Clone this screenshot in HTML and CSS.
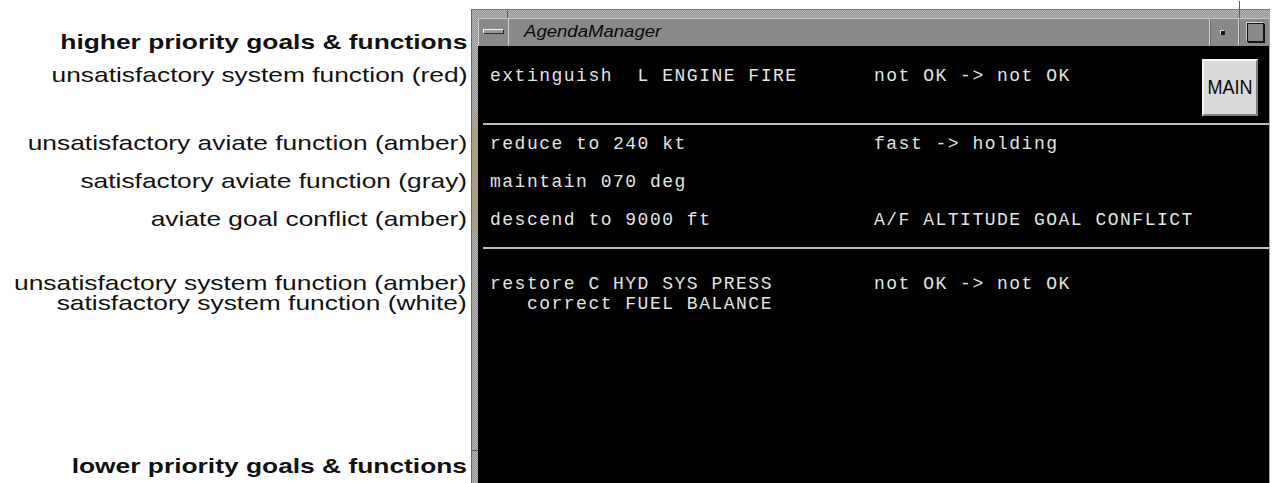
FILE: index.html
```html
<!DOCTYPE html>
<html lang="en">
<head>
<meta charset="utf-8">
<title>AgendaManager</title>
<link rel="stylesheet" href="styles.css">
</head>
<body>
<div class="page">
  <div class="legend">
    <div class="lg head">higher priority goals &amp; functions</div>
    <div class="lg r38 lg-top">unsatisfactory system function (red)</div>
    <div class="lg r38 lg-aviate">unsatisfactory aviate function (amber)</div>
    <div class="lg r38">satisfactory aviate function (gray)</div>
    <div class="lg r38">aviate goal conflict (amber)</div>
    <div class="lg r20 lg-sys">unsatisfactory system function (amber)</div>
    <div class="lg r20">satisfactory system function (white)</div>
    <div class="lg head foot">lower priority goals &amp; functions</div>
  </div>

  <div class="window">
    <span class="tick tick-top-l"></span>
    <span class="tick tick-top-r"></span>
    <span class="tick tick-left"></span>
    <div class="titlebar">
      <div class="tb-btn tb-menu"><span class="menu-bar"></span></div>
      <div class="tb-title"><span class="tb-name">AgendaManager</span></div>
      <div class="tb-btn tb-min"><span class="dot"></span></div>
      <div class="tb-btn tb-max"><span class="sq"></span></div>
    </div>
    <div class="agenda">
      <section class="band band-top">
        <div class="rows">
          <div class="row r38"><span class="goal">extinguish  L ENGINE FIRE</span><span class="state">not OK -&gt; not OK</span></div>
        </div>
        <button class="main-btn" type="button"><span class="main-label">MAIN</span></button>
      </section>
      <div class="rule"></div>
      <section class="band band-aviate">
        <div class="rows">
          <div class="row r38"><span class="goal">reduce to 240 kt</span><span class="state">fast -&gt; holding</span></div>
          <div class="row r38"><span class="goal">maintain 070 deg</span><span class="state"></span></div>
          <div class="row r38"><span class="goal">descend to 9000 ft</span><span class="state">A/F ALTITUDE GOAL CONFLICT</span></div>
        </div>
      </section>
      <div class="rule"></div>
      <section class="band band-sys">
        <div class="rows">
          <div class="row r20"><span class="goal">restore C HYD SYS PRESS</span><span class="state">not OK -&gt; not OK</span></div>
          <div class="row r20"><span class="goal">   correct FUEL BALANCE</span><span class="state"></span></div>
        </div>
      </section>
    </div>
  </div>
</div>
</body>
</html>
```

FILE: styles.css
```css
html, body {
  margin: 0;
  padding: 0;
  background: #ffffff;
}

body {
  overflow: hidden;
}

.page {
  display: flex;
  height: 483px;
  overflow: hidden;
}

/* ---------- legend column ---------- */
.legend {
  width: 471px;
  flex: none;
  box-sizing: border-box;
  padding: 30px 4px 5px 0;
  display: flex;
  flex-direction: column;
  align-items: flex-end;
  font-family: "Liberation Sans", Arial, sans-serif;
  font-size: 21px;
  color: #111;
  white-space: nowrap;
}

/* the legend face is set wide */
.lg {
  transform: scaleX(1.255);
  transform-origin: right center;
}

.lg.head {
  font-weight: bold;
  height: 24px;
  line-height: 24px;
}

.lg.r38 {
  height: 38px;
  line-height: 38px;
}

.lg.r20 {
  height: 20px;
  line-height: 20px;
}

.lg-top { margin-top: 2px; }
.lg-aviate { margin-top: 30px; }
.lg-sys { margin-top: 35px; }
.lg.foot { margin-top: auto; }

/* ---------- window ---------- */
.window {
  position: relative;
  margin-top: 9px;
  width: 799px;
  flex: none;
  box-sizing: border-box;
  padding: 8px 1px 0 6px;
  display: flex;
  flex-direction: column;
  border-left: 1px solid #6a6a6a;
  border-top: 1px solid #7a7a7a;
  background:
    linear-gradient(to bottom, transparent 95px, rgba(176, 150, 92, 0.45) 120px, rgba(176, 150, 92, 0.45) 215px, transparent 235px) 0 0 / 6px 100% no-repeat,
    repeating-conic-gradient(#989898 0 25%, #b2b2b2 0 50%) 0 0 / 2px 2px;
}

.tick {
  position: absolute;
  background: #5a5a5a;
}

.tick-top-l { left: 35px; top: 0; width: 1px; height: 8px; }
.tick-top-r { left: 767px; top: -9px; width: 1px; height: 17px; }
.tick-left { left: 0; top: 440px; width: 6px; height: 1px; }

.titlebar {
  height: 28px;
  flex: none;
  display: flex;
  align-items: stretch;
  box-sizing: border-box;
  border-top: 1px solid #c4c4c4;
  background: repeating-conic-gradient(#838383 0 25%, #8f8f8f 0 50%) 0 0 / 2px 2px;
}

.tb-btn {
  width: 30px;
  flex: none;
  display: flex;
  align-items: center;
  justify-content: center;
  box-sizing: border-box;
}

.tb-menu {
  width: 31px;
  border-right: 1px solid #d0d0d0;
  border-left: 1px solid #d0d0d0;
}

.menu-bar {
  width: 19px;
  height: 3px;
  border: 1px solid #2a2a2a;
  border-top-color: #f0f0f0;
  border-left-color: #f0f0f0;
  background: #9a9a9a;
  margin-top: -2px;
}

.tb-title {
  flex: 1;
  padding-left: 15px;
  font-family: "Liberation Sans", Arial, sans-serif;
  font-style: italic;
  font-size: 16px;
  line-height: 25px;
  color: #0a0a0a;
}

.tb-name {
  display: inline-block;
  transform: scaleX(1.16);
  transform-origin: left center;
}

.tb-min {
  border-left: 1px solid #d0d0d0;
  border-right: 1px solid #d0d0d0;
  box-shadow: inset 1px 0 0 #6c6c6c;
  justify-content: flex-start;
  padding-left: 10px;
}

.dot {
  width: 3px;
  height: 3px;
  background: #101010;
  border: 1px solid #e0e0e0;
  border-right-color: #202020;
  border-bottom-color: #202020;
  margin-top: -1px;
}

.tb-max {
  box-shadow: inset 1px 0 0 #6c6c6c;
}

.sq {
  width: 15px;
  height: 17px;
  border: 1px solid #111;
  box-shadow: 1px 1px 0 #111, -1px -1px 0 #cfcfcf;
  background: #8a8a8a;
  margin-left: 2px;
}

/* ---------- agenda list ---------- */
.agenda {
  flex: 1;
  background: #000;
  display: flex;
  flex-direction: column;
  font-family: "Courier New", "Liberation Mono", monospace;
  font-size: 18px;
  letter-spacing: 1.5px;
  color: #e4e4e4;
}

.band {
  display: flex;
  align-items: flex-start;
  padding-left: 12px;
}

.band-top {
  height: 77px;
  box-sizing: border-box;
  padding-top: 11px;
}

.band-aviate {
  padding-bottom: 8px;
}

.band-sys {
  padding-top: 25px;
}

.rows {
  flex: 1;
  display: flex;
  flex-direction: column;
}

.row {
  display: grid;
  grid-template-columns: 384px auto;
  white-space: pre;
}

.row.r38 {
  height: 38px;
  line-height: 38px;
}

.row.r20 {
  height: 20px;
  line-height: 20px;
}

.rule {
  height: 2px;
  margin-left: 5px;
  background: #bdbdbd;
  flex: none;
}

.main-btn {
  width: 56px;
  height: 57px;
  margin: 2px 11px 0 0;
  padding: 0;
  box-sizing: border-box;
  border: 2px solid;
  border-color: #f6f6f6 #808080 #808080 #f6f6f6;
  background: #d9d9d9;
  font-family: "Liberation Sans", Arial, sans-serif;
  font-size: 20px;
  color: #0a0a0a;
  letter-spacing: 0;
}

.main-label {
  display: inline-block;
  transform: scaleX(0.9);
}
```
